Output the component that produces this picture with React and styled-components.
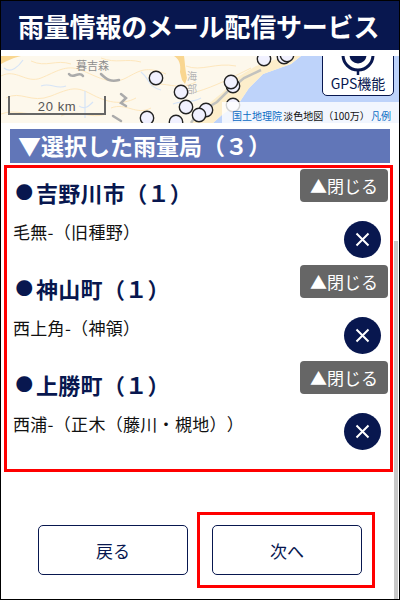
import React from "react";
import styled, { createGlobalStyle } from "styled-components";

const Global = createGlobalStyle`
  html, body { margin: 0; padding: 0; background: #fff; }
  * { box-sizing: border-box; }
  body { font-family: "Noto Sans CJK JP", "Noto Sans", sans-serif; text-spacing-trim: space-all; }
`;
const NAVY = "#08174f";

const Page = styled.div`
  position: relative; width: 400px; height: 600px; border: 1px solid #000; overflow: hidden; background: #fff;
`;
const Header = styled.h1`
  margin: 0; height: 49px; background: ${NAVY}; color: #fff; font-size: 26px; font-weight: 700;
  line-height: 49px; padding-left: 17px; white-space: nowrap; letter-spacing: -0.2px;
`;
const MapBox = styled.div`
  position: relative; margin-top: 6px; height: 67px; overflow: hidden; background: #bed3fa;
`;
const MapArt = styled.svg`
  display: block; width: 398px; height: 67px;
`;
const Scale = styled.div`
  position: absolute; left: 7px; top: 40px; width: 98px; height: 19px;
  border: 2px solid #666; border-top: 0; color: #555; font: 13px/21px "Liberation Sans", sans-serif;
  text-align: center; letter-spacing: .6px;
`;
const Attribution = styled.div`
  position: absolute; right: 0; bottom: 0; width: 177px; height: 21px; padding: 6px 8px 0 10px;
  background: rgba(255,255,255,.8); display: flex; justify-content: space-between; white-space: nowrap;
  font-size: 10px; line-height: 15px; color: #111;
`;
const Blue = styled.span`color: #0a6cc4;`;
const GpsButton = styled.div`
  position: absolute; right: 5px; top: -8px; width: 72px; height: 48px; background: #fff;
  border: 1px solid ${NAVY}; border-radius: 0 0 5px 5px; display: flex; flex-direction: column;
  align-items: center; justify-content: flex-end; color: ${NAVY}; font-size: 14px; line-height: 19px; padding-bottom: 2px;
  svg { position: absolute; left: 13px; top: 0; }
`;
const Section = styled.h2`
  margin: 6px 9px 0; height: 34px; background: #6176b8; color: #fff; font-size: 23px; font-weight: 700;
  line-height: 33px; padding-left: 8px; white-space: nowrap;
`;
const RedBox = styled.div`
  margin: 2px 6px 0 3px; height: 307px; border: 3px solid #f00; padding: 1px 2px 0 6px;
`;
const Group = styled.section`
  height: 96px;
`;
const GroupHead = styled.div`
  display: flex; justify-content: space-between; align-items: flex-start; height: 52px;
`;
const GroupName = styled.h3`
  margin: 8px 0 0; color: ${NAVY}; font-size: 22px; font-weight: 700; line-height: 30px; white-space: nowrap;
  display: flex; align-items: center; letter-spacing: .3px;
`;
const Bullet = styled.span`
  width: 23px; font-size: 17.5px; line-height: 30px; text-align: center; flex: none;
`;
const CloseBtn = styled.button`
  width: 88px; height: 33px; border: 0; border-radius: 4px; background: #666; color: #fff;
  font: 400 17px/33px "Noto Sans CJK JP", sans-serif; padding: 0; white-space: nowrap;
`;
const Row = styled.div`
  display: flex; justify-content: space-between; align-items: flex-start; padding-right: 7px; height: 37px;
`;
const RowText = styled.div`
  font-size: 17px; line-height: 22px; color: #111; white-space: nowrap; letter-spacing: .3px;
`;
const RemoveBtn = styled.button`
  width: 37px; height: 37px; border: 0; border-radius: 50%; background: ${NAVY}; padding: 0;
  display: flex; align-items: center; justify-content: center;
`;
const Footer = styled.div`
  display: flex; gap: 24px; padding: 53px 0 0 37px;
`;
const NavBtn = styled.button`
  width: 150px; height: 50px; border: 1px solid ${NAVY}; border-radius: 5px; background: #fff; color: ${NAVY};
  font: 400 17px "Noto Sans CJK JP", sans-serif; padding: 0;
`;
const Highlight = styled.div`
  position: absolute; left: 196px; top: 511px; width: 178px; height: 76px; border: 3px solid #f00; pointer-events: none;
`;
const ScrollThumb = styled.div`
  position: absolute; left: 393px; top: 240px; width: 4px; height: 360px; background: #c8c8c8;
`;

const dots = [[155,22],[180,36],[185,51],[205,54],[198,59],[146,62],[175,66],[232,30],[230,26],[232,49],[263,3],[283,1],[286,-1]];

const MapDrawing = () => (
  <MapArt viewBox="0 0 398 67">
    <path d="M0 0H300L290 8L262 18L248 32L238 47L222 58L212 67H0Z" fill="#fdf8ec" />
    <path d="M190 67L205 50L222 36L235 22L255 10L285 0H300L290 8L262 18L248 32L238 47L222 58L212 67Z" fill="#fdeecb" />
    <g fill="none" stroke="#fde7bd" strokeWidth="1">
      <path d="M0 20C15 12 25 28 40 22S65 8 80 14 110 30 125 22 145 10 165 18" />
      <path d="M5 42C20 34 30 48 50 40S75 30 90 38 120 50 135 42" />
      <path d="M30 5C45 12 55 3 70 8M100 2C115 8 125 2 140 6M150 30C165 24 175 36 195 26" />
      <path d="M195 36C215 30 230 22 250 12M185 10C200 16 215 6 235 10M110 52C125 46 135 60 150 52" />
      <path d="M0 58C15 52 30 62 45 56M60 60C75 52 90 64 105 58" />
    </g>
    <g fill="none" stroke="#d6e4f7" strokeWidth="1.2">
      <path d="M3 12C10 18 18 10 22 4M40 30C50 26 55 34 65 30M84 35V62M78 50C84 54 88 50 92 46" />
      <path d="M140 16C150 24 146 30 160 34M172 48C180 44 190 48 200 42" />
    </g>
    <path d="M0 8C8 4 12 2 20 0H0Z" fill="#f9d690" />
    <path d="M173 0C178 3 180 8 179 16L181 24L184 28L186 22C184 14 184 6 183 0Z" fill="#f9d690" />
    <path d="M190 67L196 58L216 46L226 36L243 22L260 14" fill="none" stroke="#c2c2be" strokeWidth="2.5" />
    <g fill="none" stroke="#ababab" strokeWidth="2.5" strokeLinecap="round">
      <path d="M68 18C72 24 78 14 82 20M100 18C106 24 110 26 118 24M120 38L125 42L120 47L125 50M112 60L120 65" />
    </g>
    <path d="M350 67L354 60" stroke="#aaa" strokeWidth="1" />
    <text x="75" y="14" fontSize="11" fill="#8d8d8d" fontFamily="Noto Sans CJK JP">暮吉森</text>
    <text x="186" y="24" fontSize="10" fill="#b4b4b4" fontFamily="Noto Sans CJK JP">海</text>
    <text x="186" y="37" fontSize="10" fill="#b4b4b4" fontFamily="Noto Sans CJK JP">部</text>
    {dots.map(([x, y], i) => (
      <circle key={i} cx={x} cy={y} r="6.7" fill="#f1f1ff" stroke="#222" strokeWidth="1.4" />
    ))}
  </MapArt>
);

const GpsIcon = () => (
  <svg width="44" height="30" viewBox="0 0 44 30">
    <circle cx="22" cy="6" r="15" fill="none" stroke={NAVY} strokeWidth="3" />
    <circle cx="22" cy="6" r="8.5" fill={NAVY} />
    <path d="M22 20V26" stroke={NAVY} strokeWidth="2.5" />
  </svg>
);

const Cross = () => (
  <svg width="15" height="15" viewBox="0 0 15 15">
    <path d="M1.5 1.5L13.5 13.5M13.5 1.5L1.5 13.5" stroke="#fff" strokeWidth="2" fill="none" />
  </svg>
);

const groups = [
  ["吉野川市（１）", "毛無-（旧種野）"],
  ["神山町（１）", "西上角-（神領）"],
  ["上勝町（１）", "西浦-（正木（藤川・槻地））"],
];

export default function App() {
  return (
    <Page>
      <Global />
      <Header>雨量情報のメール配信サービス</Header>
      <MapBox>
        <MapDrawing />
        <Scale>20 km</Scale>
        <Attribution>
          <Blue>国土地理院</Blue>
          <span>淡色地図（100万）</span>
          <Blue>凡例</Blue>
        </Attribution>
        <GpsButton><GpsIcon />GPS機能</GpsButton>
      </MapBox>
      <Section>▼選択した雨量局（３）</Section>
      <RedBox>
        {groups.map(([name, station]) => (
          <Group key={name}>
            <GroupHead>
              <GroupName><Bullet>●</Bullet>{name}</GroupName>
              <CloseBtn>▲閉じる</CloseBtn>
            </GroupHead>
            <Row>
              <RowText>{station}</RowText>
              <RemoveBtn><Cross /></RemoveBtn>
            </Row>
          </Group>
        ))}
      </RedBox>
      <Footer>
        <NavBtn>戻る</NavBtn>
        <NavBtn>次へ</NavBtn>
      </Footer>
      <Highlight />
      <ScrollThumb />
    </Page>
  );
}
